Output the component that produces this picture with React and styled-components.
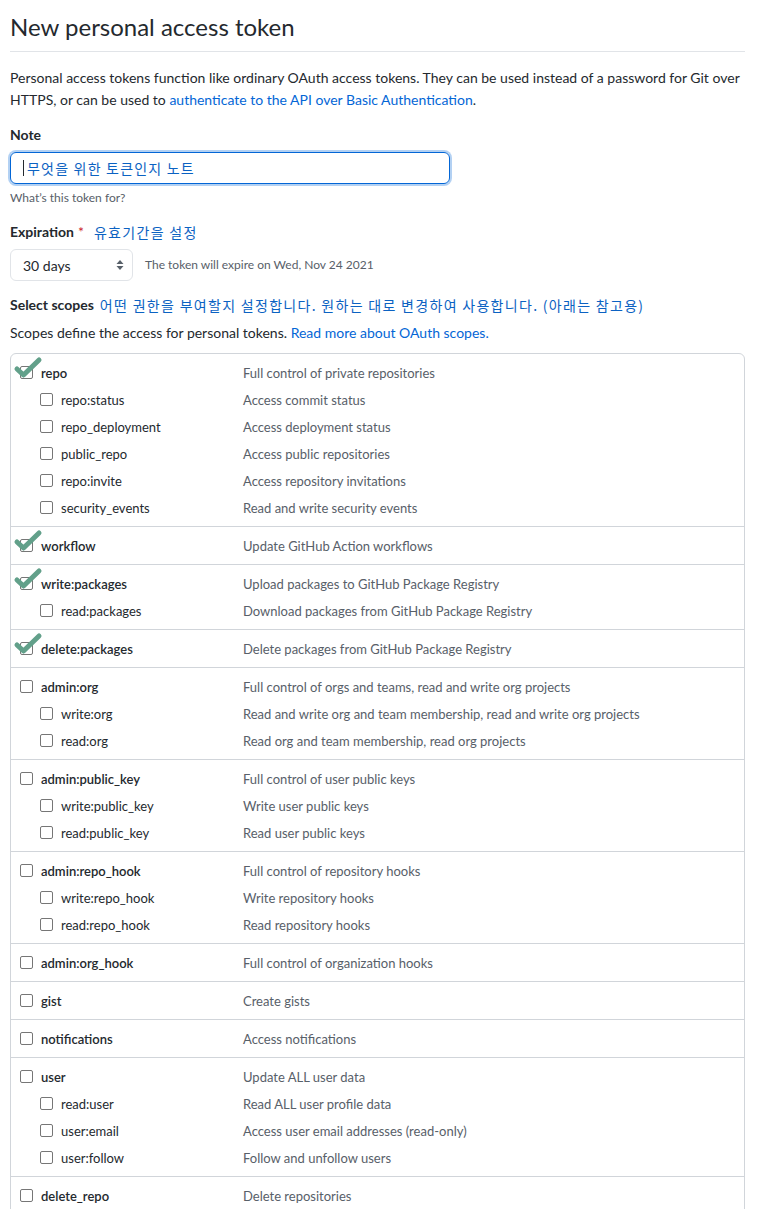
import React from "react";
import styled, { createGlobalStyle } from "styled-components";

const Global = createGlobalStyle`
  html, body { margin: 0; padding: 0; background: #fff; }
  body {
    font-family: "Segoe UI", Lato, "Noto Sans", "Noto Sans CJK KR", sans-serif;
    color: #24292e;
    font-size: 14px;
  }
`;

const Page = styled.div`
  width: 735px;
  padding: 9px 13px 0 10px;
`;

const Title = styled.h1`
  margin: 0;
  font-size: 24px;
  font-weight: 400;
  line-height: 36px;
  padding-bottom: 6px;
  border-bottom: 1px solid #e1e4e8;
`;

const Intro = styled.p`
  margin: 15px 0 0;
  line-height: 22px;
`;

const Link = styled.a`
  color: #0366d6;
  text-decoration: none;
`;

const Label = styled.div`
  margin-top: ${(p) => p.$mt || 13}px;
  font-weight: 700;
  line-height: 22px;
  display: flex;
  align-items: center;
  gap: 6px;
`;

const Required = styled.span`
  color: #cb2431;
  font-weight: 400;
  margin-left: -2px;
`;

const Annot = styled.span`
  color: #0b62c2;
  font-weight: 400;
  font-family: "Noto Sans CJK KR", sans-serif;
  font-size: 14px;
  letter-spacing: 1.3px;
  margin-left: ${(p) => p.$ml ?? 4}px;
`;

const InputBox = styled.div`
  margin-top: 6px;
  width: 426px;
  height: 30px;
  border: 1px solid #0366d6;
  border-radius: 6px;
  box-shadow: 0 0 0 2px rgba(3, 102, 214, 0.3);
  display: flex;
  align-items: center;
  padding-left: 12px;
  box-sizing: content-box;
`;

const Caret = styled.span`
  width: 1px;
  height: 16px;
  background: #24292e;
  margin-right: 3px;
`;

const InputText = styled.span`
  color: #0b62c2;
  font-family: "Noto Sans CJK KR", sans-serif;
  font-size: 14px;
  letter-spacing: 1.2px;
`;

const Note = styled.div`
  margin-top: ${(p) => p.$mt ?? 5}px;
  font-size: 12px;
  line-height: 18px;
  color: #586069;
`;

const SelectRow = styled.div`
  margin-top: 6px;
  display: flex;
  align-items: center;
  gap: 12px;
`;

const Select = styled.div`
  width: 123px;
  height: 32px;
  border: 1px solid #e1e4e8;
  border-radius: 6px;
  display: flex;
  align-items: center;
  justify-content: space-between;
  padding: 0 8px 0 12px;
  box-sizing: border-box;
`;

const Desc = styled.div`
  margin-top: 6px;
  line-height: 22px;
`;

const ScopeBox = styled.div`
  margin-top: 9px;
  border: 1px solid #d1d5da;
  border-radius: 6px;
`;

const Group = styled.div`
  padding: 5px 0 5px 9px;
  & + & {
    border-top: 1px solid #d1d5da;
  }
`;

const Row = styled.div`
  display: grid;
  grid-template-columns: 223px 1fr;
  height: 27px;
  align-items: center;
  font-size: 13px;
`;

const NameCell = styled.div`
  display: flex;
  align-items: center;
  gap: 8px;
  padding-left: ${(p) => (p.$child ? 20 : 0)}px;
  font-weight: ${(p) => (p.$child ? 400 : 600)};
  color: #24292e;
`;

const Box = styled.span`
  position: relative;
  width: 11px;
  height: 11px;
  border: 1px solid #767676;
  border-radius: 2px;
  background: #fff;
  flex: none;
`;

const Check = styled.svg`
  position: absolute;
  left: -7px;
  top: -10px;
  overflow: visible;
`;

const ScopeDesc = styled.div`
  color: #586069;
`;

const groups = [
  ["repo", "Full control of private repositories", true, [
    ["repo:status", "Access commit status"],
    ["repo_deployment", "Access deployment status"],
    ["public_repo", "Access public repositories"],
    ["repo:invite", "Access repository invitations"],
    ["security_events", "Read and write security events"],
  ]],
  ["workflow", "Update GitHub Action workflows", true, []],
  ["write:packages", "Upload packages to GitHub Package Registry", true, [
    ["read:packages", "Download packages from GitHub Package Registry"],
  ]],
  ["delete:packages", "Delete packages from GitHub Package Registry", true, []],
  ["admin:org", "Full control of orgs and teams, read and write org projects", false, [
    ["write:org", "Read and write org and team membership, read and write org projects"],
    ["read:org", "Read org and team membership, read org projects"],
  ]],
  ["admin:public_key", "Full control of user public keys", false, [
    ["write:public_key", "Write user public keys"],
    ["read:public_key", "Read user public keys"],
  ]],
  ["admin:repo_hook", "Full control of repository hooks", false, [
    ["write:repo_hook", "Write repository hooks"],
    ["read:repo_hook", "Read repository hooks"],
  ]],
  ["admin:org_hook", "Full control of organization hooks", false, []],
  ["gist", "Create gists", false, []],
  ["notifications", "Access notifications", false, []],
  ["user", "Update ALL user data", false, [
    ["read:user", "Read ALL user profile data"],
    ["user:email", "Access user email addresses (read-only)"],
    ["user:follow", "Follow and unfollow users"],
  ]],
  ["delete_repo", "Delete repositories", false, []],
  ["write:discussion", "Read and write team discussions", false, [
    ["read:discussion", "Read team discussions"],
  ]],
];

function CheckMark() {
  return (
    <Check width="28" height="24" viewBox="0 0 28 24">
      <path
        d="M3 12 L9.5 18 L25 3"
        fill="none"
        stroke="#62a08a"
        strokeWidth="5"
        strokeLinecap="round"
        strokeLinejoin="round"
      />
    </Check>
  );
}

function ScopeRow({ name, desc, child, checked }) {
  return (
    <Row>
      <NameCell $child={child}>
        <Box>{checked && <CheckMark />}</Box>
        {name}
      </NameCell>
      <ScopeDesc>{desc}</ScopeDesc>
    </Row>
  );
}

function SelectArrows() {
  return (
    <svg width="8" height="12" viewBox="0 0 8 12">
      <path d="M4 1 L7.5 5 L0.5 5 Z" fill="#586069" />
      <path d="M4 11 L7.5 7 L0.5 7 Z" fill="#586069" />
    </svg>
  );
}

export default function App() {
  return (
    <>
      <Global />
      <Page>
        <Title>New personal access token</Title>
        <Intro>
          Personal access tokens function like ordinary OAuth access tokens. They can be used
          instead of a password for Git over HTTPS, or can be used to{" "}
          <Link>authenticate to the API over Basic Authentication</Link>.
        </Intro>

        <Label>Note</Label>
        <InputBox>
          <Caret />
          <InputText>무엇을 위한 토큰인지 노트</InputText>
        </InputBox>
        <Note>What’s this token for?</Note>

        <Label $mt={14}>
          Expiration <Required>*</Required>
          <Annot>유효기간을 설정</Annot>
        </Label>
        <SelectRow>
          <Select>
            <span>30 days</span>
            <SelectArrows />
          </Select>
          <Note $mt={0}>The token will expire on Wed, Nov 24 2021</Note>
        </SelectRow>

        <Label>
          Select scopes
          <Annot $ml={0}>어떤 권한을 부여할지 설정합니다. 원하는 대로 변경하여 사용합니다. (아래는 참고용)</Annot>
        </Label>
        <Desc>
          Scopes define the access for personal tokens. <Link>Read more about OAuth scopes.</Link>
        </Desc>

        <ScopeBox>
          {groups.map(([name, desc, checked, children]) => (
            <Group key={name}>
              <ScopeRow name={name} desc={desc} checked={checked} />
              {children.map(([n, d]) => (
                <ScopeRow key={n} name={n} desc={d} child />
              ))}
            </Group>
          ))}
        </ScopeBox>
      </Page>
    </>
  );
}
